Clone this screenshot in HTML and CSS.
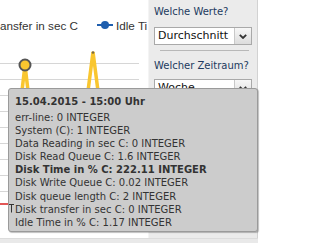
FILE: index.html
```html
<html lang="de">
<head>
<meta charset="UTF-8">
<meta name="viewport" content="width=device-width, initial-scale=1.0">
<title>Disk Statistik</title>
<link rel="stylesheet" href="styles.css">
</head>
<body>
<div class="screen">
  <div class="main">
    <div class="chart">
      <svg class="plot" width="148" height="238" viewBox="0 0 148 238">
        <text class="legend-text" x="0" y="30">ansfer in sec C</text>
        <line x1="97" y1="25" x2="113" y2="25" stroke="#1f5fae" stroke-width="2"/>
        <circle cx="105" cy="25" r="4" fill="#1f5fae"/>
        <text class="legend-text" x="116" y="30">Idle Ti</text>

        <g stroke="#d6d6d6" stroke-width="1">
          <line x1="0" y1="63.5" x2="139" y2="63.5"/>
          <line x1="0" y1="79.5" x2="139" y2="79.5"/>
          <line x1="0" y1="95.5" x2="139" y2="95.5"/>
          <line x1="0" y1="111.5" x2="139" y2="111.5"/>
          <line x1="0" y1="127.5" x2="139" y2="127.5"/>
          <line x1="0" y1="143.5" x2="139" y2="143.5"/>
          <line x1="0" y1="159.5" x2="139" y2="159.5"/>
          <line x1="0" y1="175.5" x2="139" y2="175.5"/>
          <line x1="0" y1="191.5" x2="139" y2="191.5"/>
        </g>
        <line x1="0" y1="204" x2="9" y2="204" stroke="#d81e1e" stroke-width="1.5"/>

        <g stroke="#f9c62f" stroke-width="3.5" fill="none">
          <polyline points="21.5,95 25,65 28.5,95"/>
          <polyline points="87.5,95 93,52 98.5,95"/>
        </g>
        <circle cx="93" cy="52.5" r="1.3" fill="#7a6a40"/>
        <circle cx="25" cy="65" r="5.5" fill="#f9c62f" stroke="#555" stroke-width="2"/>
      </svg>
    </div>

    <div class="panel">
      <div class="panel-label">Welche Werte?</div>
      <div class="select">
        <span class="select-value">Durchschnitt</span>
        <span class="select-btn">
          <svg width="8" height="5" viewBox="0 0 8 5"><polyline points="0.8,0.8 4,4 7.2,0.8" fill="none" stroke="#333" stroke-width="1.8"/></svg>
        </span>
      </div>
      <hr class="divider">
      <div class="panel-label second">Welcher Zeitraum?</div>
      <div class="select">
        <span class="select-value">Woche</span>
        <span class="select-btn">
          <svg width="8" height="5" viewBox="0 0 8 5"><polyline points="0.8,0.8 4,4 7.2,0.8" fill="none" stroke="#333" stroke-width="1.8"/></svg>
        </span>
      </div>
    </div>
  </div>
  <div class="footer"></div>

  <div class="tooltip">
    <div class="tip-title">15.04.2015 - 15:00 Uhr</div>
    <div class="tip-row">err-line: 0 INTEGER</div>
    <div class="tip-row">System (C): 1 INTEGER</div>
    <div class="tip-row">Data Reading in sec C: 0 INTEGER</div>
    <div class="tip-row">Disk Read Queue C: 1.6 INTEGER</div>
    <div class="tip-row active">Disk Time in % C: 222.11 INTEGER</div>
    <div class="tip-row">Disk Write Queue C: 0.02 INTEGER</div>
    <div class="tip-row">Disk queue length C: 2 INTEGER</div>
    <div class="tip-row">Disk transfer in sec C: 0 INTEGER</div>
    <div class="tip-row">Idle Time in % C: 1.17 INTEGER</div>
  </div>

  <svg class="cursor" width="5" height="9" viewBox="0 0 5 9">
    <path d="M0 0.5h5M2.5 0.5v8" stroke="#333" stroke-width="1" fill="none"/>
  </svg>
</div>
</body>
</html>
```

FILE: styles.css
```css
body {
  margin: 0;
  background: white;
  font-family: "DejaVu Sans", Verdana, sans-serif;
  color: #333;
  overflow: hidden;
}
.screen {
  position: relative;
  width: 313px;
  height: 243px;
}
.main {
  display: flex;
  width: 258px;
  height: 238px;
}
.chart {
  width: 148px;
  flex-shrink: 0;
  overflow: hidden;
}
.plot {
  display: block;
}
.legend-text {
  font-family: "Liberation Sans", Arial, sans-serif;
  font-size: 11.7px;
  fill: #333;
}
.panel {
  width: 103px;
  flex-shrink: 0;
  padding: 5px 0 0 5px;
  background: #ebebeb;
  border-left: 1px solid #f4f4f4;
  border-right: 1px solid #d2d2d2;
  overflow: hidden;
}
.panel-label {
  font-size: 10px;
  line-height: 14px;
  color: #223a5e;
  white-space: nowrap;
}
.select {
  display: flex;
  width: 96px;
  height: 16px;
  margin-top: 8px;
  background: white;
  border: 1px solid #a9a9a9;
}
.select-value {
  flex: 1;
  min-width: 0;
  white-space: nowrap;
  padding-left: 3px;
  font-size: 11px;
  line-height: 16px;
  color: #111;
}
.select-btn {
  width: 16px;
  flex-shrink: 0;
  display: flex;
  align-items: center;
  justify-content: center;
  background: linear-gradient(#f7f7f7, #dcdcdc);
  border-left: 1px solid #c8c8c8;
}
.divider {
  width: 89px;
  margin: 5px 0 0 6px;
  border: none;
  border-top: 1px solid #b8b8b8;
  height: 0;
}
.panel-label.second {
  margin-top: 8px;
}
.panel-label.second + .select {
  margin-top: 6px;
}
.footer {
  width: 258px;
  height: 5px;
  background: #e9e9e9;
  border-top: 1px solid #dcdcdc;
}
.tooltip {
  position: absolute;
  left: 8px;
  top: 88px;
  width: 236px;
  height: 136px;
  padding: 5px 6px 1px 6px;
  background: #cccccc;
  border: 1px solid #9a9a9a;
  border-radius: 3px;
  box-shadow: 1px 1px 1px rgba(0,0,0,0.25);
  font-size: 10px;
  color: #333;
}
.tip-title {
  font-weight: bold;
  line-height: 16px;
  margin-bottom: 1px;
}
.tip-row {
  line-height: 13.1px;
  white-space: nowrap;
}
.tip-row.active {
  font-weight: bold;
}
.cursor {
  position: absolute;
  left: 9px;
  top: 204px;
}
```
